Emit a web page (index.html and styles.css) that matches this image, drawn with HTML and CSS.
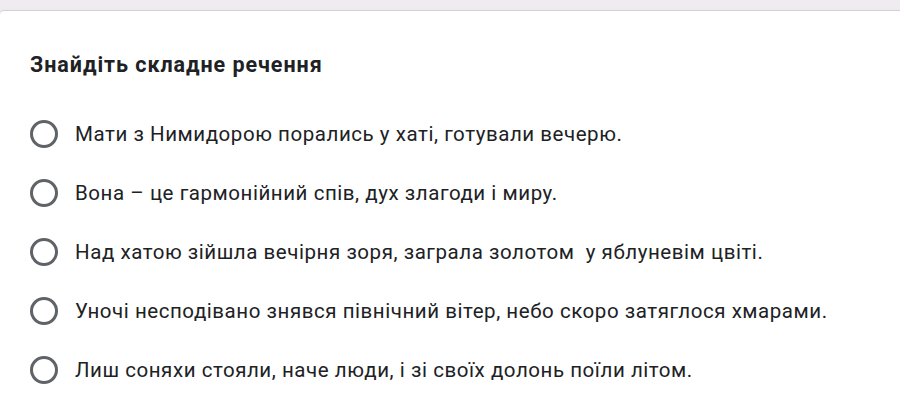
FILE: index.html
```html
<!DOCTYPE html>
<html lang="uk">
<head>
<meta charset="utf-8">
<link rel="stylesheet" href="styles.css">
</head>
<body>
<div class="page">
  <div class="card">
    <h2 class="title">Знайдіть складне речення</h2>
    <div class="options">
      <label class="option"><span class="radio"></span><span class="text">Мати з Нимидорою порались у хаті, готували вечерю.</span></label>
      <label class="option"><span class="radio"></span><span class="text">Вона – це гармонійний спів, дух злагоди і миру.</span></label>
      <label class="option"><span class="radio"></span><span class="text">Над хатою зійшла вечірня зоря, заграла золотом&nbsp; у яблуневім цвіті.</span></label>
      <label class="option"><span class="radio"></span><span class="text">Уночі несподівано знявся північний вітер, небо скоро затяглося хмарами.</span></label>
      <label class="option"><span class="radio"></span><span class="text">Лиш соняхи стояли, наче люди, і зі своїх долонь поїли літом.</span></label>
    </div>
  </div>
</div>
</body>
</html>
```
FILE: styles.css
```css
html, body {
  margin: 0;
  padding: 0;
  background: #efebf0;
}
.page {
  padding-top: 11px;
  height: 406px;
  overflow: hidden;
}
.card {
  background: #ffffff;
  height: 100%;
  border-top-left-radius: 4px;
  box-shadow: 0 -1px 1px rgba(0,0,0,0.12);
  padding: 42px 0 0 30px;
  box-sizing: border-box;
  font-family: Roboto, "Noto Sans", sans-serif;
}
.title {
  margin: 0;
  font-size: 21.5px;
  font-weight: 700;
  color: #202124;
  line-height: 24px;
  letter-spacing: 0.95px;
}
.options {
  display: flex;
  flex-direction: column;
  gap: 31px;
  margin-top: 43px;
}
.option {
  display: flex;
  align-items: center;
  gap: 17px;
  height: 28px;
}
.radio {
  width: 28px;
  height: 28px;
  box-sizing: border-box;
  border: 3px solid #5f6368;
  border-radius: 50%;
  flex: none;
}
.text {
  font-size: 20.5px;
  color: #202124;
  line-height: 24px;
  letter-spacing: 0.55px;
}
```
